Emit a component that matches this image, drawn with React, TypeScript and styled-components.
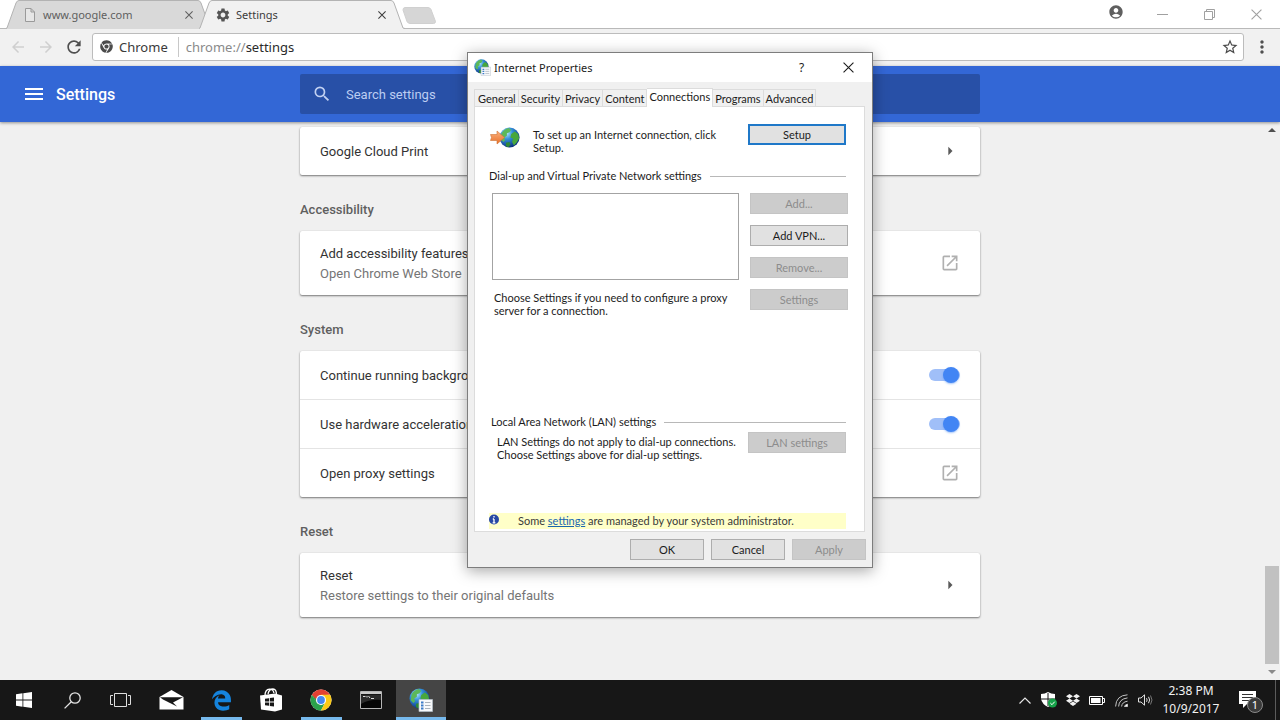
import React from 'react';
import styled, { createGlobalStyle, css } from 'styled-components';
import {
  MdAccountCircle,
  MdArrowBack,
  MdArrowForward,
  MdArrowRight,
  MdMenu,
  MdMoreVert,
  MdOpenInNew,
  MdRefresh,
  MdSearch,
  MdSettings,
  MdStarBorder,
} from 'react-icons/md';
import { FaChrome } from 'react-icons/fa';
import { FaDropbox, FaEdgeLegacy } from 'react-icons/fa6';

const systemFont = '"Noto Sans", "Open Sans", sans-serif';
const dialogFont = 'Lato, Roboto, sans-serif';
const pageFont = 'Roboto, "Liberation Sans", sans-serif';

const GlobalStyle = createGlobalStyle`
  *, *::before, *::after { box-sizing: border-box; }
  body { margin: 0; background: #f0f0f0; font-family: ${pageFont}; }
  button, input { font: inherit; color: inherit; margin: 0; }
  svg { display: block; flex: none; }
`;

const Desktop = styled.div`
  position: relative;
  display: flex;
  flex-direction: column;
  min-height: 100vh;
  overflow: hidden;
`;

const PlainButton = styled.button`
  display: flex;
  align-items: center;
  justify-content: center;
  padding: 0;
  border: 0;
  background: none;
`;

/* ---------- Browser frame ---------- */

const TabStrip = styled.div`
  display: flex;
  height: 28px;
  padding-left: 6px;
  background: #fff;
  font: 11px/28px ${systemFont};
`;

const BrowserTab = styled.div<{ $active?: boolean }>`
  position: relative;
  z-index: ${(p) => (p.$active ? 2 : 1)};
  display: flex;
  align-items: center;
  width: 206px;
  height: 29px;
  padding: 0 19px 0 16px;
  gap: 5px;
  color: ${(p) => (p.$active ? '#3c3c3c' : '#5f5f5f')};

  & + & {
    margin-left: -13px;
  }
`;

const TabShape = styled.svg`
  position: absolute;
  inset: 0;
  z-index: -1;
`;

const TabLabel = styled.span`
  flex: 1;
`;

const NewTab = styled(PlainButton)`
  width: 36px;
  height: 17px;
  margin-top: 7px;
  margin-left: -4px;
`;

const WindowControls = styled.div`
  display: flex;
  align-items: center;
  margin-left: auto;
`;

const WindowButton = styled(PlainButton)<{ $dark?: boolean }>`
  width: 47px;
  height: ${(p) => (p.$dark ? 28 : 26)}px;
  padding-bottom: ${(p) => (p.$dark ? 4 : 0)}px;
  color: ${(p) => (p.$dark ? '#5f5f5f' : '#a0a0a0')};
`;

const Toolbar = styled.div`
  display: flex;
  align-items: center;
  height: 38px;
  padding: 0 4px 2px;
  background: #f1f1f1;
  border-top: 1px solid #b9b9b9;
  color: #5a5a5a;
`;

const ToolButton = styled(PlainButton)<{ $faded?: boolean }>`
  width: 28px;
  height: 28px;
  color: ${(p) => (p.$faded ? '#cfcfcf' : '#4f4f4f')};
`;

const Omnibox = styled.label`
  display: flex;
  align-items: center;
  flex: 1;
  height: 28px;
  margin: 0 4px;
  padding: 0 4px 0 7px;
  background: #fff;
  border: 1px solid #bcbcbc;
  border-radius: 3px;
  font: 13px/20px ${systemFont};
  color: #8a8a8a;
`;

const Origin = styled.span`
  margin-left: 6px;
  padding-right: 10px;
  margin-right: 7px;
  border-right: 1px solid #c8c8c8;
  color: #3a3a3a;
`;

const Address = styled.input`
  flex: 1;
  min-width: 0;
  padding: 0;
  border: 0;
  outline: 0;
  background: none;
  color: #2a2a2a;
`;

/* ---------- Settings page ---------- */

const AppBar = styled.header`
  position: relative;
  z-index: 1;
  display: grid;
  grid-template-columns: 1fr minmax(0, 680px) 1fr;
  align-items: center;
  height: 56px;
  background: #3367d6;
  box-shadow: 0 1px 3px rgba(0, 0, 0, 0.4);
  color: #fff;
`;

const Brand = styled.div`
  display: flex;
  align-items: center;
  gap: 10px;
  padding-left: 22px;
`;

const BrandTitle = styled.h1`
  margin: 0;
  font-size: 16px;
  font-weight: 500;
`;

const SearchBox = styled.label`
  display: flex;
  align-items: center;
  gap: 14px;
  height: 40px;
  padding-left: 12px;
  background: #2850a7;
  border-radius: 2px;
  color: #c2d1f2;
`;

const SearchInput = styled.input`
  flex: 1;
  border: 0;
  outline: 0;
  padding: 0;
  background: none;
  font-size: 13px;

  &::placeholder {
    color: #bccdf2;
    opacity: 1;
  }
`;

const Content = styled.main`
  display: grid;
  grid-template-columns: 16px minmax(0, 1fr) 16px;
  flex: 1;
  background: #f0f0f0;
`;

const Sections = styled.div`
  grid-column: 2;
  width: 100%;
  max-width: 680px;
  margin: 0 auto;
  padding: 5px 0 24px;
`;

const SectionTitle = styled.h2`
  margin: 25px 0 11px;
  color: #5f5f5f;
  font-size: 13px;
  font-weight: 500;
  line-height: 20px;
`;

const Card = styled.section`
  background: #fff;
  border-radius: 2px;
  box-shadow: 0 1px 2px rgba(0, 0, 0, 0.5), 0 0 1px rgba(0, 0, 0, 0.12);
`;

const SettingRow = styled.div<{ $tall?: boolean }>`
  display: flex;
  align-items: center;
  justify-content: space-between;
  height: ${(p) => (p.$tall ? 64 : 48)}px;
  padding: 0 20px;
  color: #333;
  font-size: 13px;
  line-height: 20px;

  & + & {
    height: 49px;
    border-top: 1px solid #e4e4e4;
  }
`;

const RowLabel = styled.label`
  padding-top: 2px;
`;

const SubLabel = styled.div`
  color: #757575;
`;

const RowAction = styled(PlainButton)`
  width: 20px;
  height: 20px;
  color: #b0b0b0;
`;

const ArrowAction = styled(RowAction)`
  color: #5a5a5a;
`;

const Toggle = styled.input`
  appearance: none;
  position: relative;
  width: 31px;
  height: 12px;
  border-radius: 6px;
  background: #a0bff8;

  &::after {
    content: '';
    position: absolute;
    top: -2px;
    right: 1px;
    width: 16px;
    height: 16px;
    border-radius: 50%;
    background: #4285f4;
    box-shadow: 0 1px 2px rgba(66, 133, 244, 0.5);
  }
`;

const ScrollTrack = styled.div`
  display: flex;
  flex-direction: column;
  align-items: center;
  padding: 5px 0 4px;
  color: #505050;
`;

const ScrollThumb = styled.div`
  width: 14px;
  height: 98px;
  margin: auto 0 4px;
  background: #c1c1c1;
`;

/* ---------- Dialog ---------- */

const Dialog = styled.section`
  position: absolute;
  z-index: 5;
  top: 52px;
  left: calc(50% - 173px);
  width: 406px;
  background: #f0f0f0;
  border: 1px solid #7d7d7d;
  box-shadow: 0 3px 14px rgba(0, 0, 0, 0.35);
  color: #1c1c1c;
  font: 11px/13px ${dialogFont};
`;

const TitleBar = styled.header`
  display: flex;
  align-items: center;
  height: 29px;
  padding-left: 6px;
  background: #fff;
  font: 12px/28px ${systemFont};
`;

const DialogTitle = styled.h2`
  flex: 1;
  margin: 0 0 0 3px;
  font-size: 11px;
  font-weight: 400;
`;

const TitleButton = styled(PlainButton)`
  width: 47px;
  height: 28px;
`;

const TabList = styled.div`
  display: flex;
  align-items: flex-end;
  height: 24px;
  padding-left: 6px;
`;

const DialogTab = styled.button<{ $active?: boolean }>`
  position: relative;
  height: 17px;
  padding: 0 2px;
  border: 1px solid #dcdcdc;
  border-width: 1px 1px 0 0;
  background: #f0f0f0;
  white-space: nowrap;
  line-height: 15px;

  &:first-child {
    padding-left: 3px;
    border-left-width: 1px;
  }

  ${(p) =>
    p.$active &&
    css`
      height: 19px;
      margin-bottom: -1px;
      padding-bottom: 3px;
      background: #fff;
    `}
`;

const Panel = styled.div`
  margin: 0 7px 0 6px;
  height: 426px;
  padding: 17px 18px 2px 14px;
  display: flex;
  flex-direction: column;
  background: #fff;
  border: 1px solid #dcdcdc;
`;

const SetupRow = styled.div`
  display: flex;
  gap: 13px;
  padding-left: 1px;
`;

const SetupText = styled.p`
  flex: 1;
  margin: 4px 0 0;
`;

const DialogButton = styled.button<{ $focus?: boolean; $small?: boolean }>`
  flex: none;
  width: ${(p) => (p.$small ? 74 : 98)}px;
  height: 21px;
  padding: 0;
  background: #e1e1e1;
  border: ${(p) => (p.$focus ? '2px solid #1f78c8' : '1px solid #adadad')};

  &:disabled {
    background: #cccccc;
    border-color: #c4c4c4;
    color: #8c8c8c;
  }
`;

const GroupTitle = styled.h3<{ $inset?: boolean }>`
  display: flex;
  align-items: center;
  gap: 8px;
  margin: 0;
  padding-left: ${(p) => (p.$inset ? 2 : 0)}px;
  font-size: 11px;
  font-weight: 400;
  line-height: 14px;

  &::after {
    content: '';
    flex: 1;
    height: 1px;
    background: #b8b8b8;
  }
`;

const DialSection = styled.div`
  margin-top: 15px;
`;

const DialGroup = styled.div`
  display: grid;
  grid-template-columns: 247px 98px;
  gap: 11px;
  margin: 10px 0 0 3px;
`;

const ConnectionList = styled.div`
  height: 87px;
  border: 1px solid #a3a3a3;
`;

const ConnectionSide = styled.div`
  display: flex;
  flex-direction: column;
  gap: 11px;
`;

const ButtonStack = styled.div`
  display: flex;
  flex-direction: column;
  gap: 11px;
`;

const Note = styled.p`
  margin: 0;
  padding-left: 2px;
  white-space: nowrap;
`;

const LanSection = styled.div`
  margin-top: 98px;
`;

const LanRow = styled.div`
  display: flex;
  justify-content: space-between;
  margin-top: 3px;
  padding-left: 6px;
`;

const LanNote = styled(Note)`
  margin-top: 3px;
`;

const InfoBar = styled.div`
  display: flex;
  align-items: center;
  gap: 19px;
  height: 16px;
  padding-bottom: 2px;
  margin-top: auto;
  background: #ffffc8;
  color: #3a3a3a;
`;

const InfoLink = styled.a`
  color: #1a66b0;
  text-decoration: underline;
`;

const DialogFooter = styled.footer`
  display: flex;
  justify-content: flex-end;
  gap: 7px;
  padding: 7px 6px;
`;

/* ---------- Taskbar ---------- */

const Taskbar = styled.footer`
  display: flex;
  height: 40px;
  background: #171717;
  color: #f2f2f2;
  font-family: ${systemFont};
`;

const StartGroup = styled.div`
  display: flex;
  margin-right: 2px;
`;

const StartButton = styled(PlainButton)`
  width: 48px;
`;

const TaskButton = styled(PlainButton)<{ $running?: boolean; $active?: boolean }>`
  position: relative;
  width: 50px;
  background: ${(p) => (p.$active ? '#454545' : 'none')};

  ${(p) =>
    (p.$running || p.$active) &&
    css`
      &::after {
        content: '';
        position: absolute;
        bottom: 0;
        left: ${p.$active ? 0 : 5}px;
        right: ${p.$active ? 0 : 4}px;
        height: 3px;
        background: #76b9ed;
      }
    `}
`;

const Tray = styled.div`
  display: flex;
  align-items: center;
  margin-left: auto;
`;

const TrayButton = styled(PlainButton)`
  width: 24px;
  height: 40px;
`;

const Clock = styled.time`
  width: 70px;
  padding-right: 2px;
  font-size: 12px;
  line-height: 18px;
  text-align: center;
`;

const ActionCenter = styled(PlainButton)`
  width: 48px;
  height: 40px;
`;

const ShowDesktop = styled(PlainButton)`
  width: 5px;
  height: 40px;
  border-left: 1px solid #5c5c5c;
`;

/* ---------- Drawings ---------- */

const CloseIcon = ({ size = 8, width = 1 }: { size?: number; width?: number }) => (
  <svg width={size} height={size} viewBox="0 0 10 10" stroke="currentColor" strokeWidth={width} fill="none">
    <path d="M.5.5l9 9M9.5.5l-9 9" />
  </svg>
);

const Trapezoid = ({ fill }: { fill: string }) => (
  <TabShape width="206" height="29" viewBox="0 0 206 29">
    <path d="M0 29 L1 28 L10 3 Q11 .5 13 .5 H192 Q194 .5 195 3 L204 28 L206 29 Z" fill={fill} />
    <path d="M0 28.5 L1 28 L10 3 Q11 .5 13 .5 H192 Q194 .5 195 3 L204 28 L206 28.5" fill="none" stroke="#b3b3b3" />
  </TabShape>
);

const Globe = ({ size }: { size: number }) => (
  <svg width={size} height={size} viewBox="0 0 24 24">
    <defs>
      <radialGradient id="sea" cx="35%" cy="28%" r="75%">
        <stop offset="0" stopColor="#b9ecff" />
        <stop offset=".4" stopColor="#3591da" />
        <stop offset="1" stopColor="#0b2f7d" />
      </radialGradient>
    </defs>
    <circle cx="12" cy="12" r="11.5" fill="url(#sea)" />
    <path d="M3 7 Q6 2 11 1 L14 3 L12 6 L9 7 L9 10 L6 12 L7 15 L5 17 L2 14 Z" fill="#5cb85a" />
    <path d="M14 8 L18 5 L22 8 L23 13 L20 18 L17 21 L15 17 L16 13 L13 12 Z" fill="#48a73c" />
    <path d="M8 18 L12 17 L13 20 L11 23 L8 22 Z" fill="#2f8a36" />
  </svg>
);

const InternetOptionsIcon = ({ size }: { size: number }) => (
  <svg width={size} height={size} viewBox="0 0 24 24">
    <Globe size={21} />
    <path d="M10 11.500H23.500V23.500H10Z" fill="#f7f9fb" stroke="#b4bec8" strokeWidth=".7" />
    <path d="M12 14.500h2.500M12 17.500h2.500M12 20.500h2.500" stroke="#3c7cc8" strokeWidth="1.800" />
    <path d="M16 14.500h5.500M16 17.500h5.500M16 20.500h5.500" stroke="#a9b2bc" strokeWidth="1" />
  </svg>
);

const SetupIcon = () => (
  <svg width="30" height="24" viewBox="0 0 30 24">
    <defs>
      <linearGradient id="arrow" x1="0" x2="0" y1="0" y2="1">
        <stop offset="0" stopColor="#fbb07c" />
        <stop offset="1" stopColor="#e8702a" />
      </linearGradient>
    </defs>
    <svg x="9" y="3" width="21" height="21">
      <Globe size={21} />
    </svg>
    <path d="M.5 10.500H7V7L14.500 13.500L7 20V16.500H.5L1.500 13.500Z" fill="url(#arrow)" stroke="#cf7234" strokeWidth=".6" />
  </svg>
);

const ChromeLogo = () => (
  <svg width="22" height="22" viewBox="0 0 48 48">
    <circle cx="24" cy="24" r="23" fill="#fff" />
    <path d="M24 24 L4.100 12.500 A23 23 0 0 1 43.900 12.500 L24 13.500 Z" fill="#e34133" />
    <path d="M4.100 12.500 A23 23 0 0 0 24 47 L33.100 29.300 L24 34.500 L14.900 29.300 Z" fill="#2ba24c" />
    <path d="M24 47 A23 23 0 0 0 43.900 12.500 H24 V13.500 L33.100 18.800 V29.300 Z" fill="#fbc916" />
    <path d="M4.100 12.500 L14.900 29.300 L14.900 18.800 L24 13.500 V12.500 Z" fill="#e34133" />
    <path d="M4.100 12.500 L14 29.500 L18 32 L14.900 24 Z" fill="#2ba24c" />
    <circle cx="24" cy="24" r="11" fill="#fff" />
    <circle cx="24" cy="24" r="8.500" fill="#4688f1" />
  </svg>
);

/* ---------- Screens ---------- */

const BrowserFrame = () => (
  <>
    <TabStrip>
      <BrowserTab>
        <Trapezoid fill="#d9d9d9" />
        <svg width="16" height="14" viewBox="0 0 16 14" fill="#e6e6e6" stroke="#9a9a9a">
          <path d="M3.500.5h5.500l3.500 3.500v9.500h-9zM9 .5v3.500h3.500" />
        </svg>
        <TabLabel>www.google.com</TabLabel>
        <PlainButton aria-label="Close tab"><CloseIcon width={1.3} /></PlainButton>
      </BrowserTab>
      <BrowserTab $active>
        <Trapezoid fill="#f1f1f1" />
        <MdSettings size={16} color="#555" />
        <TabLabel>Settings</TabLabel>
        <PlainButton aria-label="Close tab"><CloseIcon width={1.3} /></PlainButton>
      </BrowserTab>
      <NewTab aria-label="New tab">
        <svg width="36" height="17" viewBox="0 0 36 17">
          <path d="M4 .5h23q2 0 3 2l4.500 12q0 2-2 2H9q-2 0-3-2L2 3q0-2.500 2-2.500z" fill="#d6d6d6" stroke="#d0d0d0" />
        </svg>
      </NewTab>
      <WindowControls>
        <WindowButton $dark aria-label="Profile"><MdAccountCircle size={16} /></WindowButton>
        <WindowButton aria-label="Minimize">
          <svg width="11" height="11" viewBox="0 0 11 11" stroke="currentColor"><path d="M0 5.500h11" /></svg>
        </WindowButton>
        <WindowButton aria-label="Restore">
          <svg width="11" height="11" viewBox="0 0 11 11" stroke="currentColor" fill="none">
            <path d="M.5 2.500h8v8h-8zM2.500 2.500v-2h8v8h-2" />
          </svg>
        </WindowButton>
        <WindowButton aria-label="Close"><CloseIcon size={11} /></WindowButton>
      </WindowControls>
    </TabStrip>
    <Toolbar>
      <ToolButton $faded aria-label="Back"><MdArrowBack size={18} /></ToolButton>
      <ToolButton $faded aria-label="Forward"><MdArrowForward size={18} /></ToolButton>
      <ToolButton aria-label="Reload"><MdRefresh size={20} /></ToolButton>
      <Omnibox>
        <FaChrome size={13} color="#4c4c4c" />
        <Origin>Chrome</Origin>
        <span>chrome://</span>
        <Address type="text" aria-label="Address" defaultValue="settings" />
        <MdStarBorder size={18} color="#4a4a4a" />
      </Omnibox>
      <ToolButton aria-label="Menu"><MdMoreVert size={20} /></ToolButton>
    </Toolbar>
  </>
);

const SettingsPage = () => (
  <>
    <AppBar>
      <Brand>
        <PlainButton aria-label="Main menu"><MdMenu size={24} color="#fff" /></PlainButton>
        <BrandTitle>Settings</BrandTitle>
      </Brand>
      <SearchBox>
        <MdSearch size={20} />
        <SearchInput type="text" placeholder="Search settings" aria-label="Search settings" />
      </SearchBox>
    </AppBar>
    <Content>
      <Sections>
        <Card>
          <SettingRow>
            <RowLabel htmlFor="print">Google Cloud Print</RowLabel>
            <ArrowAction id="print"><MdArrowRight size={20} /></ArrowAction>
          </SettingRow>
        </Card>
        <SectionTitle>Accessibility</SectionTitle>
        <Card>
          <SettingRow $tall>
            <RowLabel htmlFor="features">
              Add accessibility features
              <SubLabel>Open Chrome Web Store</SubLabel>
            </RowLabel>
            <RowAction id="features"><MdOpenInNew size={20} /></RowAction>
          </SettingRow>
        </Card>
        <SectionTitle>System</SectionTitle>
        <Card>
          <SettingRow>
            <RowLabel htmlFor="background">Continue running background apps when Google Chrome is closed</RowLabel>
            <Toggle id="background" type="checkbox" role="switch" defaultChecked />
          </SettingRow>
          <SettingRow>
            <RowLabel htmlFor="hardware">Use hardware acceleration when available</RowLabel>
            <Toggle id="hardware" type="checkbox" role="switch" defaultChecked />
          </SettingRow>
          <SettingRow>
            <RowLabel htmlFor="proxy">Open proxy settings</RowLabel>
            <RowAction id="proxy"><MdOpenInNew size={20} /></RowAction>
          </SettingRow>
        </Card>
        <SectionTitle>Reset</SectionTitle>
        <Card>
          <SettingRow $tall>
            <RowLabel htmlFor="reset">
              Reset
              <SubLabel>Restore settings to their original defaults</SubLabel>
            </RowLabel>
            <ArrowAction id="reset"><MdArrowRight size={20} /></ArrowAction>
          </SettingRow>
        </Card>
      </Sections>
      <ScrollTrack>
        <svg width="8" height="6" viewBox="0 0 8 6" fill="currentColor"><path d="M0 5l4-4 4 4z" /></svg>
        <ScrollThumb />
        <svg width="8" height="8" viewBox="0 0 8 8" fill="#8a8a8a"><path d="M0 2l4 4 4-4z" /></svg>
      </ScrollTrack>
    </Content>
  </>
);

const dialogTabs = ['General', 'Security', 'Privacy', 'Content', 'Connections', 'Programs', 'Advanced'];

const InternetProperties = () => (
  <Dialog role="dialog" aria-label="Internet Properties">
    <TitleBar>
      <InternetOptionsIcon size={17} />
      <DialogTitle>Internet Properties</DialogTitle>
      <TitleButton aria-label="Help">?</TitleButton>
      <TitleButton aria-label="Close"><CloseIcon size={11} /></TitleButton>
    </TitleBar>
    <TabList role="tablist">
      {dialogTabs.map((name) => (
        <DialogTab key={name} role="tab" $active={name === 'Connections'}>{name}</DialogTab>
      ))}
    </TabList>
    <Panel role="tabpanel">
      <SetupRow>
        <SetupIcon />
        <SetupText>To set up an Internet connection, click<br />Setup.</SetupText>
        <DialogButton $focus>Setup</DialogButton>
      </SetupRow>
      <DialSection>
        <GroupTitle>Dial-up and Virtual Private Network settings</GroupTitle>
        <DialGroup>
          <ConnectionSide>
            <ConnectionList role="listbox" aria-label="Connections" />
            <Note>Choose Settings if you need to configure a proxy<br />server for a connection.</Note>
          </ConnectionSide>
          <ButtonStack>
            <DialogButton disabled>Add...</DialogButton>
            <DialogButton>Add VPN...</DialogButton>
            <DialogButton disabled>Remove...</DialogButton>
            <DialogButton disabled>Settings</DialogButton>
          </ButtonStack>
        </DialGroup>
      </DialSection>
      <LanSection>
        <GroupTitle $inset>Local Area Network (LAN) settings</GroupTitle>
        <LanRow>
          <LanNote>LAN Settings do not apply to dial-up connections.<br />Choose Settings above for dial-up settings.</LanNote>
          <DialogButton disabled>LAN settings</DialogButton>
        </LanRow>
      </LanSection>
      <InfoBar>
        <svg width="10" height="12" viewBox="0 0 10 12">
          <circle cx="5" cy="5.500" r="5" fill="#2748a4" />
          <path d="M5 2v1.600M5 5v4M3.800 5h1.200M3.600 8.800h2.800" stroke="#fff" strokeWidth="1.300" />
        </svg>
        <span>Some <InfoLink href="#settings">settings</InfoLink> are managed by your system administrator.</span>
      </InfoBar>
    </Panel>
    <DialogFooter>
      <DialogButton $small>OK</DialogButton>
      <DialogButton $small>Cancel</DialogButton>
      <DialogButton $small disabled>Apply</DialogButton>
    </DialogFooter>
  </Dialog>
);

const WindowsTaskbar = () => (
  <Taskbar>
    <StartGroup>
      <StartButton aria-label="Start">
        <svg width="16" height="16" viewBox="0 0 16 16" fill="#fff">
          <path d="M0 2.200L6.500 1.300V7.600H0zM7.300 1.200L16 0V7.600H7.300zM0 8.400H6.500V14.700L0 13.800zM7.300 8.400H16V16L7.300 14.800z" />
        </svg>
      </StartButton>
      <StartButton aria-label="Search">
        <svg width="17" height="17" viewBox="0 0 17 17" fill="none" stroke="#e4e4e4" strokeWidth="1.300">
          <circle cx="11" cy="6" r="5.200" />
          <path d="M7.300 9.700L.6 16.400" />
        </svg>
      </StartButton>
      <StartButton aria-label="Task view">
        <svg width="21" height="14" viewBox="0 0 21 14" fill="none" stroke="#dedede">
          <path d="M4.500.5h12v13h-12zM3 2.500H.5v9H3M18 2.500h2.500v9H18" />
        </svg>
      </StartButton>
    </StartGroup>
    <TaskButton aria-label="Mail">
      <svg width="25" height="20" viewBox="0 0 25 20">
        <path d="M.5 7L12.500 0L24.500 7V19.500H.5z" fill="#fff" />
        <path d="M1 7.200H24L14 12.500L18 16.500L4 9.500z" fill="#171717" />
      </svg>
    </TaskButton>
    <TaskButton $running aria-label="Edge"><FaEdgeLegacy size={21} color="#1583dc" /></TaskButton>
    <TaskButton aria-label="Store">
      <svg width="22" height="24" viewBox="0 0 22 24">
        <path d="M5 8Q5 1.500 9.500 1.200Q13 1 14 5M8 6Q9 1 13 1Q16.500 1 16.500 7" fill="none" stroke="#fff" strokeWidth="1.300" />
        <path d="M0 7.500L15 5.500L22 7.500V21.500L15 23.500L1 21.500z" fill="#fff" />
        <path d="M5 10.700L9 10.200V13.600H5zM9.800 10.100L14 9.500V13.600H9.800zM5 14.400H9V17.800L5 17.300zM9.800 14.400H14V18.500L9.800 17.900z" fill="#171717" />
      </svg>
    </TaskButton>
    <TaskButton $running aria-label="Chrome"><ChromeLogo /></TaskButton>
    <TaskButton aria-label="Command Prompt">
      <svg width="22" height="18" viewBox="0 0 22 18">
        <path d="M.5.5h21v17H.5z" fill="#050505" stroke="#b5b5b5" />
        <path d="M1 1h20v2H1z" fill="#c9c9c9" />
        <path d="M1 3.500h20V9Q10 8 1 13z" fill="#2b2b2b" />
        <path d="M3 5.500h2.500M7 5v1.500M8.500 5l1.500 2M11 7.500h3" stroke="#ddd" />
      </svg>
    </TaskButton>
    <TaskButton $active aria-label="Internet Properties"><InternetOptionsIcon size={24} /></TaskButton>
    <Tray>
      <TrayButton aria-label="Show hidden icons">
        <svg width="12" height="7" viewBox="0 0 12 7" fill="none" stroke="#e6e6e6" strokeWidth="1.200"><path d="M.5 6.500L6 1l5.500 5.500" /></svg>
      </TrayButton>
      <TrayButton aria-label="Security">
        <svg width="16" height="16" viewBox="0 0 16 16">
          <path d="M0 2Q4 2 7 0Q10 2 14 2V7Q13 12 7 15Q1 12 0 7z" fill="#fff" />
          <path d="M7 1v13M0 7h14" stroke="#171717" />
          <circle cx="11.500" cy="11" r="4.500" fill="#16a34a" />
          <path d="M9.300 11l1.700 1.700 2.700-3" fill="none" stroke="#fff" />
        </svg>
      </TrayButton>
      <TrayButton aria-label="Dropbox"><FaDropbox size={14} /></TrayButton>
      <TrayButton aria-label="Battery">
        <svg width="16" height="9" viewBox="0 0 16 9"><path d="M.5.5h13v8H.5zM14 2.500h1.500v4H14" fill="none" stroke="#fff" /><path d="M2 2h9.500v5H2z" fill="#fff" /></svg>
      </TrayButton>
      <TrayButton aria-label="Network">
        <svg width="13" height="13" viewBox="0 0 13 13" fill="none" stroke="#c4c4c4">
          <path d="M.6 12.500Q1 1.500 12.500.8M3.600 12.500Q4 5 12.500 3.900M6.600 12.500Q7 8 12.500 7.200" />
          <path d="M9.500 12.500Q10 10.500 12.500 10.200V12.500z" fill="#fff" />
        </svg>
      </TrayButton>
      <TrayButton aria-label="Volume">
        <svg width="15" height="12" viewBox="0 0 15 12" fill="none" stroke="#e0e0e0">
          <path d="M.5 4h2.500L6.500.8v10.400L3 8H.5zM8.500 4.200Q9.800 6 8.500 7.800M10.500 2.800Q12.800 6 10.500 9.200" />
          <path d="M12.500 1.500Q15.500 6 12.500 10.500" stroke="#777" />
        </svg>
      </TrayButton>
      <Clock>2:38 PM<br />10/9/2017</Clock>
      <ActionCenter aria-label="Notifications">
        <svg width="26" height="26" viewBox="0 0 26 26">
          <path d="M1 4H18V17H9L5 21V17H1z" fill="#fff" />
          <path d="M4 7.500h11M4 10.500h11M4 13.500h7" stroke="#333" />
          <circle cx="17" cy="18" r="7.500" fill="#3a3a3a" stroke="#8a8a8a" />
          <text x="17" y="22" fill="#fff" fontSize="11" fontFamily="Noto Sans, sans-serif" textAnchor="middle">1</text>
        </svg>
      </ActionCenter>
      <ShowDesktop aria-label="Show desktop" />
    </Tray>
  </Taskbar>
);

export default function App() {
  return (
    <Desktop>
      <GlobalStyle />
      <BrowserFrame />
      <SettingsPage />
      <WindowsTaskbar />
      <InternetProperties />
    </Desktop>
  );
}
